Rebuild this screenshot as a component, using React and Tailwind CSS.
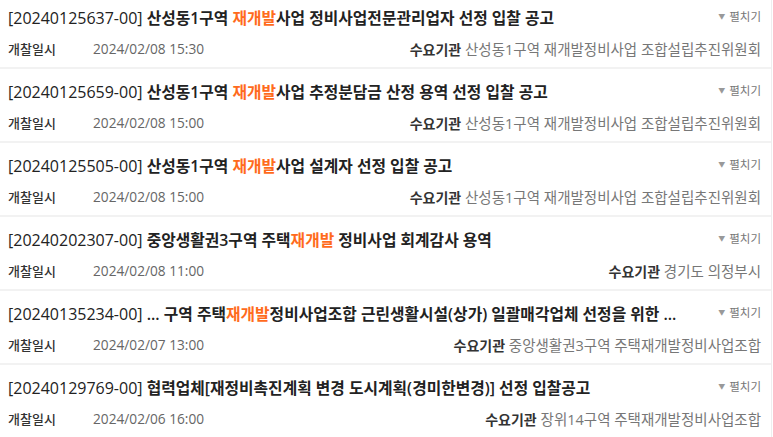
import React from "react";

const rows = [
  {
    id: "[20240125637-00]",
    pre: " 산성동1구역 ",
    hl: "재개발",
    post: "사업 정비사업전문관리업자 선정 입찰 공고",
    date: "2024/02/08 15:30",
    org: "산성동1구역 재개발정비사업 조합설립추진위원회",
  },
  {
    id: "[20240125659-00]",
    pre: " 산성동1구역 ",
    hl: "재개발",
    post: "사업 추정분담금 산정 용역 선정 입찰 공고",
    date: "2024/02/08 15:00",
    org: "산성동1구역 재개발정비사업 조합설립추진위원회",
  },
  {
    id: "[20240125505-00]",
    pre: " 산성동1구역 ",
    hl: "재개발",
    post: "사업 설계자 선정 입찰 공고",
    date: "2024/02/08 15:00",
    org: "산성동1구역 재개발정비사업 조합설립추진위원회",
  },
  {
    id: "[20240202307-00]",
    pre: " 중앙생활권3구역 주택",
    hl: "재개발",
    post: " 정비사업 회계감사 용역",
    date: "2024/02/08 11:00",
    org: "경기도 의정부시",
  },
  {
    id: "[20240135234-00]",
    pre: " ... 구역 주택",
    hl: "재개발",
    post: "정비사업조합 근린생활시설(상가) 일괄매각업체 선정을 위한 ...",
    date: "2024/02/07 13:00",
    org: "중앙생활권3구역 주택재개발정비사업조합",
  },
  {
    id: "[20240129769-00]",
    pre: " 협력업체[재정비촉진계획 변경 도시계획(경미한변경)] 선정 입찰공고",
    hl: "",
    post: "",
    date: "2024/02/06 16:00",
    org: "장위14구역 주택재개발정비사업조합",
  },
];

export default function App() {
  return (
    <div
      className="w-[772px] min-h-[437px] bg-white border-r border-[#eeeeee] overflow-hidden"
      style={{ fontFamily: '"Open Sans", "Noto Sans CJK KR", sans-serif' }}
    >
      <div className="-mt-[5px]">
        {rows.map((r, i) => (
          <div
            key={i}
            className="h-[74px] pl-[8px] pr-[10px] pt-[13px] border-b-2 border-[#f2f2f2]"
          >
            <div className="flex items-start h-[20px]">
              <div className="flex-1 text-[15.8px] leading-[20px] text-[#222] font-semibold whitespace-nowrap overflow-hidden">
                <span className="font-normal text-[16px]">{r.id}</span>
                {r.pre}
                {r.hl && <span className="text-[#ff6b1c]">{r.hl}</span>}
                {r.post}
              </div>
              <div className="shrink-0 flex items-center gap-[4px] text-[11.5px] leading-[16px] text-[#777] pt-[1px]">
                <span className="text-[7px] text-[#999]">▼</span>
                <span>펼치기</span>
              </div>
            </div>
            <div className="flex items-center justify-between mt-[11px] h-[20px] leading-[20px]">
              <div className="flex items-center">
                <span className="w-[85px] text-[13px] font-medium text-[#333]">개찰일시</span>
                <span className="text-[13.7px] text-[#666]">{r.date}</span>
              </div>
              <div className="whitespace-nowrap">
                <span className="text-[14px] font-semibold text-[#333]">수요기관</span>
                <span className="text-[14.5px] text-[#777]"> {r.org}</span>
              </div>
            </div>
          </div>
        ))}
      </div>
    </div>
  );
}
